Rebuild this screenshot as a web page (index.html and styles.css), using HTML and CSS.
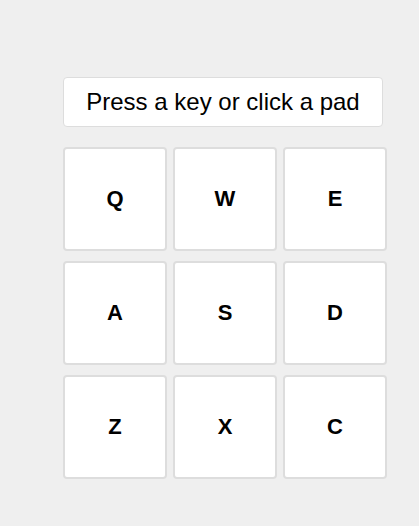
FILE: index.html
```html
<!DOCTYPE html>
<html>
<head>
<meta charset="utf-8">
<link rel="stylesheet" href="styles.css">
</head>
<body>
<div class="machine">
  <div class="display">Press a key or click a pad</div>
  <div class="pads">
    <button class="pad">Q</button>
    <button class="pad">W</button>
    <button class="pad">E</button>
    <button class="pad">A</button>
    <button class="pad">S</button>
    <button class="pad">D</button>
    <button class="pad">Z</button>
    <button class="pad">X</button>
    <button class="pad">C</button>
  </div>
</div>
</body>
</html>
```
FILE: styles.css
```css
html, body {
  margin: 0;
  background: #efefef;
  font-family: "Liberation Sans", Arial, sans-serif;
}
.machine {
  padding: 77px 0 0 63px;
}
.display {
  box-sizing: border-box;
  width: 320px;
  height: 50px;
  background: #fff;
  border: 1px solid #dddddd;
  border-radius: 4px;
  display: flex;
  align-items: center;
  justify-content: center;
  font-size: 24px;
  color: #000;
  margin-bottom: 20px;
}
.pads {
  display: grid;
  grid-template-columns: repeat(3, 104px);
  column-gap: 6px;
  row-gap: 10px;
}
.pad {
  box-sizing: border-box;
  width: 104px;
  height: 104px;
  background: #fff;
  border: 2px solid #dddddd;
  border-radius: 4px;
  font-family: "Liberation Sans", Arial, sans-serif;
  font-weight: bold;
  font-size: 22px;
  color: #000;
  padding: 0;
  display: flex;
  align-items: center;
  justify-content: center;
}
```
